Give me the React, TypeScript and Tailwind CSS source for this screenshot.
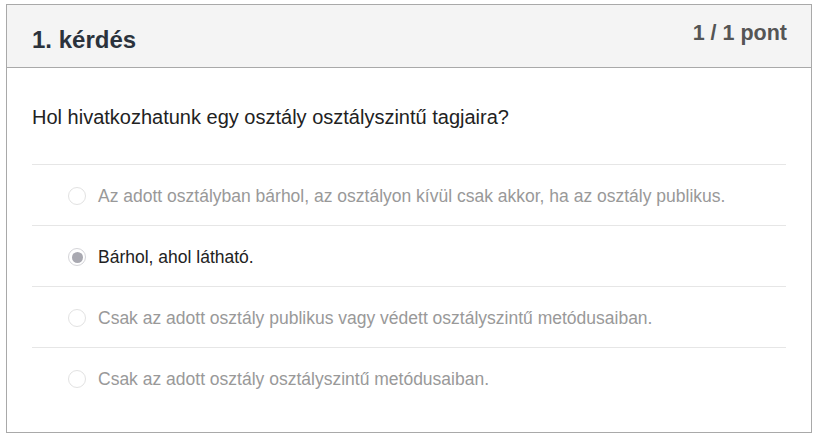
const options = [
  { text: "Az adott osztályban bárhol, az osztályon kívül csak akkor, ha az osztály publikus.", selected: false },
  { text: "Bárhol, ahol látható.", selected: true },
  { text: "Csak az adott osztály publikus vagy védett osztályszintű metódusaiban.", selected: false },
  { text: "Csak az adott osztály osztályszintű metódusaiban.", selected: false },
];

const Radio = ({ selected }: { selected: boolean }) => (
  <span
    className={
      "flex items-center justify-center w-[18px] h-[18px] rounded-full border shrink-0 " +
      (selected ? "border-[#d4d4d8] bg-white" : "border-[#e2e2e2] bg-white")
    }
  >
    {selected && <span className="w-[11px] h-[11px] rounded-full bg-[#a9a9b1]"></span>}
  </span>
);

const App = () => {
  return (
    <div className="pt-[4px] pl-[6px] bg-white h-[439px] font-['Liberation_Sans',Arial,sans-serif]">
      <div className="w-[806px] h-[429px] border border-[#a9a9a9] bg-white">
        <div className="h-[63px] bg-[#f4f4f4] border-b border-[#a9a9a9] flex justify-between pl-[25px] pr-[24px]">
          <span className="text-[24px] font-bold text-[#2b323c] leading-none pt-[23px]">1. kérdés</span>
          <span className="text-[21.5px] font-bold text-[#555] leading-none pt-[18px]">1 / 1 pont</span>
        </div>
        <div className="px-[25px] pt-[35px]">
          <p className="text-[20px] leading-[28px] text-[#222] mb-[33px]">
            Hol hivatkozhatunk egy osztály osztályszintű tagjaira?
          </p>
          {options.map((o) => (
            <div key={o.text} className="h-[61px] border-t border-[#e6e6e6] flex items-center pl-[36px] gap-[12px] pt-[2px]">
              <Radio selected={o.selected} />
              <span className={"text-[17.5px] " + (o.selected ? "text-[#222]" : "text-[#999]")}>{o.text}</span>
            </div>
          ))}
        </div>
      </div>
    </div>
  );
};

export default App;
